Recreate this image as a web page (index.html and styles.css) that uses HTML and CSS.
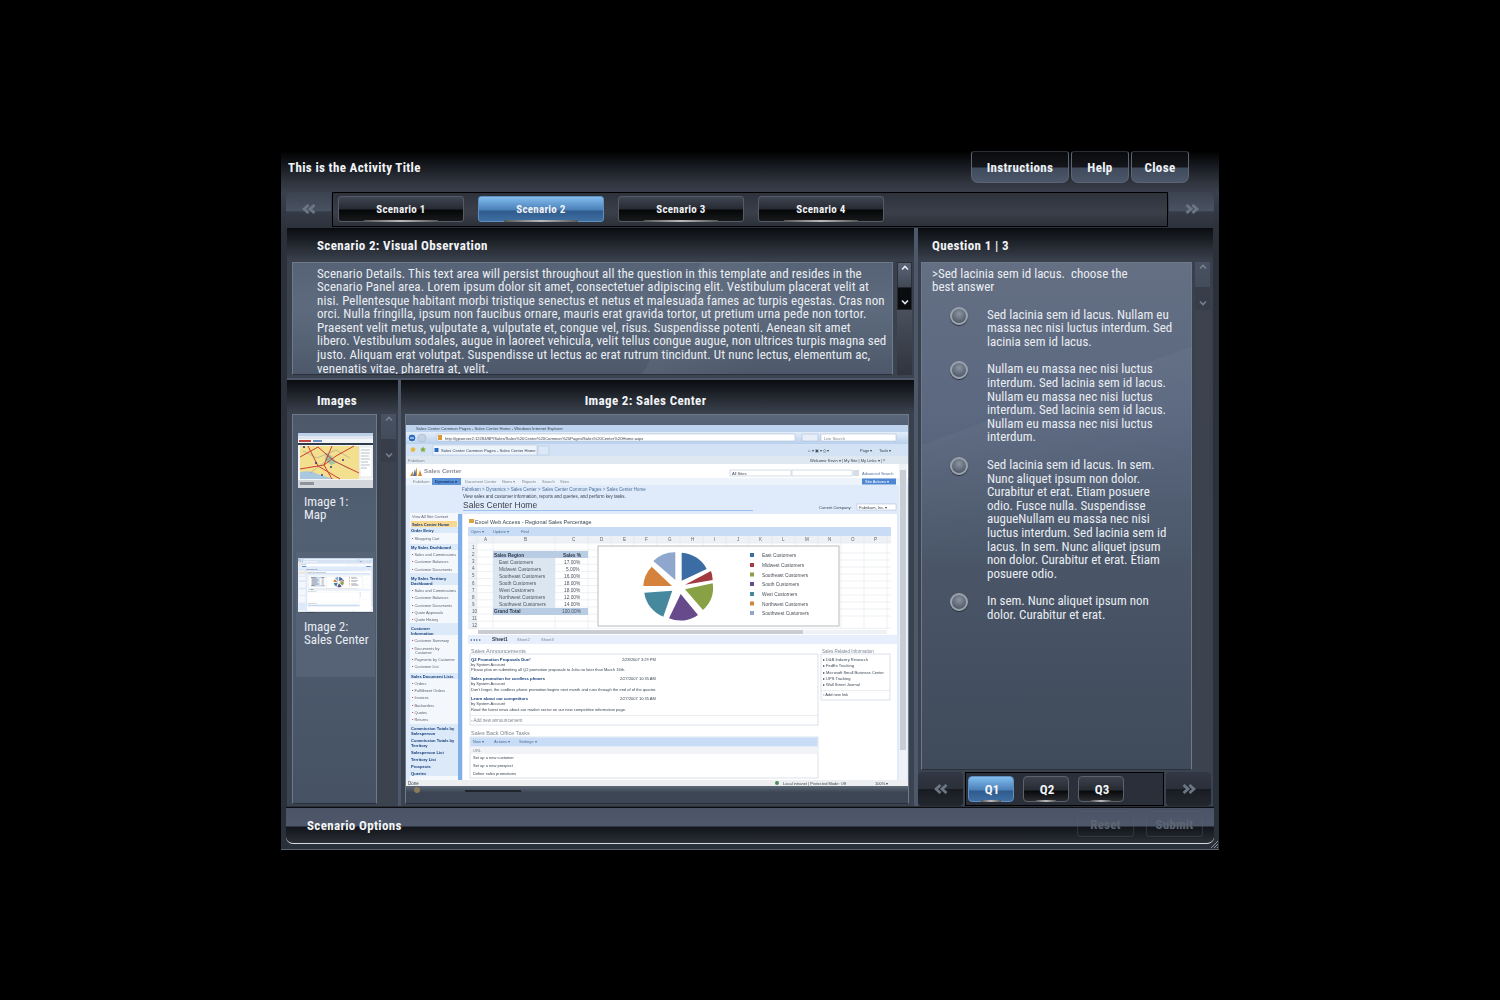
FILE: index.html
```html
<!DOCTYPE html>
<html lang="en">
<head>
<meta charset="utf-8">
<title>Activity</title>
<link rel="stylesheet" href="styles.css">
</head>
<body>
<div class="window">
  <header class="titlebar">
    <div class="activity-title">This is the Activity Title</div>
    <div class="top-buttons">
      <button class="top-btn btn-instructions">Instructions</button>
      <button class="top-btn btn-help">Help</button>
      <button class="top-btn btn-close">Close</button>
    </div>
  </header>

  <nav class="scenario-nav">
    <div class="arrow arrow-left"><svg class="dbl" viewBox="0 0 14 10"><path d="M6.500 1 2 5l4.500 4M12.500 1 8 5l4.500 4"/></svg></div>
    <div class="strip">
      <div class="tab">Scenario 1</div>
      <div class="tab active">Scenario 2</div>
      <div class="tab">Scenario 3</div>
      <div class="tab">Scenario 4</div>
    </div>
    <div class="arrow arrow-right"><svg class="dbl" viewBox="0 0 14 10"><path d="M1.500 1 6 5 1.500 9M7.500 1 12 5 7.500 9"/></svg></div>
  </nav>

  <main class="main">
    <div class="left-col">
      <section class="panel scenario-panel">
        <h2 class="panel-head head-indent">Scenario 2: Visual Observation</h2>
        <div class="panel-body">
          <div class="box text-box">
            <p class="copy scenario-copy">Scenario Details. This text area will persist throughout all the question in this template and resides in the<br>Scenario Panel area. Lorem ipsum dolor sit amet, consectetuer adipiscing elit. Vestibulum placerat velit at<br>nisi. Pellentesque habitant morbi tristique senectus et netus et malesuada fames ac turpis egestas. Cras non<br>orci. Nulla fringilla, ipsum non faucibus ornare, mauris erat gravida tortor, ut pretium urna pede non tortor.<br>Praesent velit metus, vulputate a, vulputate et, congue vel, risus. Suspendisse potenti. Aenean sit amet<br>libero. Vestibulum sodales, augue in laoreet vehicula, velit tellus congue augue, non ultrices turpis magna sed<br>justo. Aliquam erat volutpat. Suspendisse ut lectus ac erat rutrum tincidunt. Ut nunc lectus, elementum ac,<br>venenatis vitae, pharetra at, velit.</p>
          </div>
          <div class="scrollbar">
            <div class="sb-up"><svg class="chev" viewBox="0 0 8 6"><path d="M1 4.500 4 1.500l3 3"/></svg></div>
            <div class="sb-thumb"><svg class="chev" viewBox="0 0 8 6"><path d="M1 1.500 4 4.500l3-3"/></svg></div>
            <div class="sb-rest"></div>
          </div>
        </div>
      </section>

      <div class="lower-row">
        <section class="panel images-panel">
          <h2 class="panel-head head-images">Images</h2>
          <div class="panel-body">
            <div class="box thumbs">
              <div class="thumb-card">
                <svg class="thumb-img" viewBox="0 0 75 55">
                  <rect width="75" height="55" fill="#f4f5f7"/>
                  <rect width="75" height="3" fill="#bcd0e8"/>
                  <rect y="3" width="75" height="3" fill="#dfe6f0"/>
                  <rect x="1" y="7" width="12" height="2" fill="#c2473e"/>
                  <rect x="15" y="7" width="9" height="2" fill="#6f8fc0"/>
                  <rect y="10" width="75" height="2" fill="#2f3a4a"/>
                  <path d="M2 13h59v33H2z" fill="#f3e08e"/>
                  <path d="M2 39c8-2 14 0 20 3l14 4H2z" fill="#a9c7de"/>
                  <path d="M28 20l6 3 4 7-5 2-6-5z" fill="#9fc7a2"/>
                  <path d="M2 24 20 14l16 14 25 12M10 13l10 20 22 13M2 36l24-4 12-9 18-10M34 13l-8 19 8 14" stroke="#cf3b33" stroke-width="1" fill="none"/>
                  <path d="M5 18l14 7 19-8 14 8M12 40l20-15 19 11" stroke="#7b7f86" stroke-width=".4" fill="none"/>
                  <circle cx="6" cy="14" r="1.100" fill="#2c3e8c"/>
                  <circle cx="18" cy="30" r="1.100" fill="#2c3e8c"/>
                  <circle cx="33" cy="34" r="1" fill="#2c3e8c"/>
                  <circle cx="45" cy="27" r="1" fill="#2c3e8c"/>
                  <circle cx="24" cy="42" r="1" fill="#2c3e8c"/>
                  <rect x="62" y="14" width="12" height="30" fill="#fff" stroke="#c3c7ce" stroke-width=".4"/>
                  <path d="M63 17h9M63 20h9M63 23h8M63 26h9M63 29h7M63 32h9M63 35h6" stroke="#9aa2ad" stroke-width=".7"/>
                  <rect y="47" width="75" height="8" fill="#d4d7dc"/>
                  <rect x="2" y="49" width="14" height="3" fill="#8e949d"/>
                </svg>
                <div class="thumb-label">Image 1:<br>Map</div>
              </div>
              <div class="thumb-card selected">
                <svg class="thumb-img" viewBox="406 425 502 368"><use href="#shot"/></svg>
                <div class="thumb-label">Image 2:<br>Sales Center</div>
              </div>
            </div>
            <div class="scrollbar sb-faded">
              <div class="sb-up"><svg class="chev" viewBox="0 0 8 6"><path d="M1 4.500 4 1.500l3 3"/></svg></div>
              <div class="sb-thumb"><svg class="chev" viewBox="0 0 8 6"><path d="M1 1.500 4 4.500l3-3"/></svg></div>
              <div class="sb-rest"></div>
            </div>
          </div>
        </section>

        <section class="panel image-panel">
          <h2 class="panel-head head-center">Image 2: Sales Center</h2>
          <div class="panel-body">
            <div class="box image-box">
              <svg class="shot" viewBox="406 425 502 368">
                <g id="shot">
                  <defs>
                    <linearGradient id="gBar" x1="0" y1="0" x2="0" y2="1"><stop offset="0" stop-color="#e4eefa"/><stop offset="1" stop-color="#b9d0ec"/></linearGradient>
                    <linearGradient id="gTask" x1="0" y1="0" x2="0" y2="1"><stop offset="0" stop-color="#5d6978"/><stop offset="1" stop-color="#39424f"/></linearGradient>
                  </defs>
                  <rect x="406" y="425" width="502" height="361" fill="#dfeafa"/>
                  <rect x="406" y="425" width="502" height="7" fill="#bed4ee"/>
                  <text class="s41" x="416" y="430">Sales Center Common Pages - Sales Center Home - Windows Internet Explorer</text>
                  <rect x="406" y="432" width="502" height="12" fill="url(#gBar)"/>
                  <circle cx="412" cy="438" r="4" fill="#2a6cc0" stroke="#e5eef8"/>
                  <path d="M410 438h4" stroke="#fff"/>
                  <circle cx="422" cy="438" r="4" fill="#c6d2e2" stroke="#9eaec4" stroke-width=".5"/>
                  <rect x="437" y="434" width="358" height="7" fill="#fff" stroke="#9fb5d0" stroke-width=".5"/>
                  <rect x="438" y="435" width="4" height="5" fill="#d99a3a"/>
                  <text class="s41" x="445" y="439.500">http://gpserver2:12284/BP/Sales/Sales%20Center%20Common%20Pages/Sales%20Center%20Home.aspx</text>
                  <rect x="802" y="434" width="16" height="7" fill="#e8eff9" stroke="#9fb5d0" stroke-width=".5"/>
                  <rect x="821" y="434" width="75" height="7" fill="#fff" stroke="#9fb5d0" stroke-width=".5"/>
                  <text class="s4g" x="824" y="439.500">Live Search</text>
                  <rect x="406" y="444" width="502" height="12" fill="#d3e2f4"/>
                  <path d="M413 446.500l1 2 2 .3-1.500 1.500.4 2-1.900-1-1.900 1 .4-2-1.500-1.500 2-.3z" fill="#e5b32c"/>
                  <path d="M423 446.500l1 2 2 .3-1.500 1.500.4 2-1.900-1-1.900 1 .4-2-1.500-1.500 2-.3z" fill="#7fae3a"/>
                  <rect x="433" y="445" width="104" height="10" fill="#eef4fc" stroke="#aac0dc" stroke-width=".5"/>
                  <rect x="434.500" y="448" width="4" height="4" fill="#2a6cc0"/>
                  <text class="s41" x="441" y="451.500">Sales Center Common Pages - Sales Center Home</text>
                  <rect x="538" y="446" width="11" height="9" fill="#dce8f6" stroke="#aac0dc" stroke-width=".5"/>
                  <text class="s4" x="808" y="451.500">⌂ ▾  ▣ ▾  ⎙ ▾</text>
                  <text class="s4" x="860" y="451.500">Page ▾</text>
                  <text class="s4" x="879" y="451.500">Tools ▾</text>
                  <rect x="406" y="456" width="502" height="8" fill="#dfe7f1"/>
                  <text class="s4g" x="408" y="462">Fabrikam</text>
                  <text class="s4" x="810" y="462">Welcome Kevin ▾ | My Site | My Links ▾ | ?</text>
                  <rect x="406" y="464" width="502" height="14" fill="#fff"/>
                  <path d="M410 476l3-5v5zM414 476l3-9v9zM418 476l2-6 2 6z" fill="#d8892e"/>
                  <path d="M413 476l2-7 1 7z" fill="#3a6fb5"/>
                  <text class="logo" x="424" y="473">Sales Center</text>
                  <rect x="730" y="470" width="61" height="6" fill="#fff" stroke="#a9bcd3" stroke-width=".5"/>
                  <text class="s4" x="732" y="474.500">All Sites</text>
                  <rect x="792" y="470" width="60" height="6" fill="#fff" stroke="#a9bcd3" stroke-width=".5"/>
                  <rect x="853" y="470" width="6" height="6" fill="#d5dde8"/>
                  <text class="s4b" x="862" y="474.500">Advanced Search</text>
                  <rect x="406" y="478" width="502" height="7" fill="#edf3fb"/>
                  <text class="s4g" x="413" y="483">Fabrikam</text>
                  <rect x="432" y="478" width="29" height="7" fill="#5f93d8"/>
                  <text class="s4n" x="435" y="483">Dynamics ▾</text>
                  <text class="s4g" x="465" y="483">Document Center</text>
                  <text class="s4g" x="502" y="483">News ▾</text>
                  <text class="s4g" x="522" y="483">Reports</text>
                  <text class="s4g" x="542" y="483">Search</text>
                  <text class="s4g" x="560" y="483">Sites</text>
                  <rect x="862" y="478.500" width="34" height="6" fill="#4f86d2"/>
                  <text class="s4w" x="865" y="483">Site Actions ▾</text>
                  <text class="s45b" x="462" y="490.500">Fabrikam &gt; Dynamics &gt; Sales Center &gt; Sales Center Common Pages &gt; Sales Center Home</text>
                  <text class="s45" x="463" y="498">View sales and customer information, reports and queries, and perform key tasks.</text>
                  <text class="hero" x="463" y="507.500">Sales Center Home</text>
                  <rect x="463" y="510" width="290" height=".7" fill="#7fb0e8"/>
                  <text class="s4" x="819" y="508.500">Current Company:</text>
                  <rect x="857" y="504" width="39" height="6" fill="#fff" stroke="#a9bcd3" stroke-width=".5"/>
                  <text class="s4" x="859" y="508.500">Fabrikam, Inc. ▾</text>

                  <rect x="458" y="514" width="4" height="267" fill="#7fafe8"/>
                  <rect x="410" y="513" width="48" height="267" fill="#f4f8fd"/>
                  <rect x="411" y="521" width="46" height="6" fill="#fbd88f"/>
                  <rect x="410" y="527" width="48" height="6" fill="#dce9f8"/>
                  <rect x="410" y="544" width="48" height="6" fill="#dce9f8"/>
                  <rect x="410" y="573" width="48" height="12" fill="#dce9f8"/>
                  <rect x="410" y="623" width="48" height="12" fill="#dce9f8"/>
                  <rect x="410" y="673" width="48" height="6" fill="#dce9f8"/>
                  <rect x="410" y="724" width="48" height="52" fill="#dce9f8"/>
                  <text class="n" x="412" y="518">View All Site Content</text>
                  <text class="nh" x="412" y="525.500">Sales Center Home</text>
                  <text class="nh" x="411" y="532">Order Entry</text>
                  <text class="n" x="412" y="539.500"><tspan class="bul">▪</tspan> Shopping Cart</text>
                  <text class="nh" x="411" y="548.500">My Sales Dashboard</text>
                  <text class="n" x="412" y="556"><tspan class="bul">▪</tspan> Sales and Commissions</text>
                  <text class="n" x="412" y="563"><tspan class="bul">▪</tspan> Customer Balances</text>
                  <text class="n" x="412" y="570.500"><tspan class="bul">▪</tspan> Customer Documents</text>
                  <text class="nh" x="411" y="579.500">My Sales Territory</text>
                  <text class="nh" x="411" y="584.500">Dashboard</text>
                  <text class="n" x="412" y="592"><tspan class="bul">▪</tspan> Sales and Commissions</text>
                  <text class="n" x="412" y="599"><tspan class="bul">▪</tspan> Customer Balances</text>
                  <text class="n" x="412" y="606.500"><tspan class="bul">▪</tspan> Customer Documents</text>
                  <text class="n" x="412" y="613.500"><tspan class="bul">▪</tspan> Quote Approvals</text>
                  <text class="n" x="412" y="620.500"><tspan class="bul">▪</tspan> Quote History</text>
                  <text class="nh" x="411" y="629.500">Customer</text>
                  <text class="nh" x="411" y="634.500">Information</text>
                  <text class="n" x="412" y="642"><tspan class="bul">▪</tspan> Customer Summary</text>
                  <text class="n" x="412" y="649.500"><tspan class="bul">▪</tspan> Documents by</text>
                  <text class="n" x="415" y="654">Customer</text>
                  <text class="n" x="412" y="661"><tspan class="bul">▪</tspan> Payments by Customer</text>
                  <text class="n" x="412" y="668"><tspan class="bul">▪</tspan> Customer List</text>
                  <text class="nh" x="411" y="677.500">Sales Document Lists</text>
                  <text class="n" x="412" y="684.500"><tspan class="bul">▪</tspan> Orders</text>
                  <text class="n" x="412" y="692"><tspan class="bul">▪</tspan> Fulfillment Orders</text>
                  <text class="n" x="412" y="699"><tspan class="bul">▪</tspan> Invoices</text>
                  <text class="n" x="412" y="706.500"><tspan class="bul">▪</tspan> Backorders</text>
                  <text class="n" x="412" y="713.500"><tspan class="bul">▪</tspan> Quotes</text>
                  <text class="n" x="412" y="720.500"><tspan class="bul">▪</tspan> Returns</text>
                  <text class="nh" x="411" y="730">Commission Totals by</text>
                  <text class="nh" x="411" y="735">Salesperson</text>
                  <text class="nh" x="411" y="741.500">Commission Totals by</text>
                  <text class="nh" x="411" y="746.500">Territory</text>
                  <text class="nh" x="411" y="753.500">Salesperson List</text>
                  <text class="nh" x="411" y="760.500">Territory List</text>
                  <text class="nh" x="411" y="767.500">Prospects</text>
                  <text class="nh" x="411" y="774.500">Queries</text>

                  <rect x="463" y="514" width="434" height="266" fill="#fff"/>
                  <rect x="469" y="519" width="5" height="4" fill="#d9a441"/>
                  <text class="s55" x="475" y="523.500">Excel Web Access - Regional Sales Percentage</text>
                  <rect x="468" y="527" width="423" height="9" fill="#c8dcf5"/>
                  <text class="s4b" x="471" y="532.500">Open ▾</text>
                  <text class="s4b" x="493" y="532.500">Update ▾</text>
                  <text class="s4b" x="521" y="532.500">Find</text>
                  <rect x="468" y="536" width="423" height="7" fill="#eef1f5"/>
                  <rect x="468" y="543" width="9" height="86" fill="#eef1f5"/>
                  <g class="grid-lines">
                    <path d="M477 536v93M493 536v93M555 536v93M588 536v93M611 536v10M634 536v10M657 536v10M680 536v10M703 536v10M726 536v10M749 536v10M772 536v10M795 536v10M818 536v10M841 536v93M864 536v93M887 536v93"/>
                    <path d="M468 543h423M468 550h130M468 557.100h130M468 564.300h130M468 571.400h130M468 578.500h130M468 585.600h130M468 592.700h130M468 599.800h130M468 607h130M468 614.100h130M468 621.200h130M468 628.300h423M839 553h52M839 560h52M839 567h52M839 574h52M839 581h52M839 588h52M839 595h52M839 602h52M839 609h52M839 616h52"/>
                  </g>
                  <g class="col-heads">
                    <text x="484" y="541">A</text><text x="524" y="541">B</text><text x="572" y="541">C</text><text x="600" y="541">D</text><text x="623" y="541">E</text><text x="645" y="541">F</text><text x="668" y="541">G</text><text x="691" y="541">H</text><text x="714" y="541">I</text><text x="737" y="541">J</text><text x="759" y="541">K</text><text x="782" y="541">L</text><text x="805" y="541">M</text><text x="828" y="541">N</text><text x="851" y="541">O</text><text x="874" y="541">P</text>
                  </g>
                  <g class="row-heads">
                    <text x="472" y="549">1</text><text x="472" y="556">2</text><text x="472" y="563.200">3</text><text x="472" y="570.300">4</text><text x="472" y="577.400">5</text><text x="472" y="584.500">6</text><text x="472" y="591.600">7</text><text x="472" y="598.700">8</text><text x="472" y="605.800">9</text><text x="472" y="613">10</text><text x="472" y="620">11</text><text x="472" y="627.200">12</text>
                  </g>
                  <rect x="493" y="551" width="95" height="7" fill="#b8cce4"/>
                  <rect x="493" y="558" width="62" height="50" fill="#dce6f1"/>
                  <rect x="493" y="608" width="95" height="7" fill="#b8cce4"/>
                  <text class="c5b" x="494" y="556.500">Sales Region</text>
                  <text class="c5b" x="563" y="556.500">Sales %</text>
                  <text class="c5" x="499" y="563.500">East Customers</text><text class="c5" x="564" y="563.500">17.00%</text>
                  <text class="c5" x="499" y="570.500">Midwest Customers</text><text class="c5" x="566" y="570.500">5.00%</text>
                  <text class="c5" x="499" y="577.700">Southeast  Customers</text><text class="c5" x="564" y="577.700">16.00%</text>
                  <text class="c5" x="499" y="584.800">South Customers</text><text class="c5" x="564" y="584.800">18.00%</text>
                  <text class="c5" x="499" y="591.900">West Customers</text><text class="c5" x="564" y="591.900">18.00%</text>
                  <text class="c5" x="499" y="599">Northwest Customers</text><text class="c5" x="564" y="599">12.00%</text>
                  <text class="c5" x="499" y="606.100">Southwest Customers</text><text class="c5" x="564" y="606.100">14.00%</text>
                  <text class="c5b" x="494" y="613.300">Grand Total</text><text class="c5" x="562" y="613.300">100.00%</text>

                  <rect x="598" y="546" width="241" height="80" fill="#fff" stroke="#a8abb0" stroke-width=".8"/>
                  <path d="M681.700 580.700V552.700A30 30 0 0 1 706.700 569Z" fill="#3b6ca3"/>
                  <path d="M685 584.700 711 571A30 30 0 0 1 712.700 580Z" fill="#a23a3f"/>
                  <path d="M685 589.300 712.700 583.300A30 30 0 0 1 703 610Z" fill="#87a144"/>
                  <path d="M680.700 594 698 615A30 30 0 0 1 669 618.300Z" fill="#664a8b"/>
                  <path d="M672.300 590.700 663.300 616.700A30 30 0 0 1 644.300 592.700Z" fill="#46899e"/>
                  <path d="M672 586H643.300A30 30 0 0 1 651.700 566.700Z" fill="#d4823c"/>
                  <path d="M675.300 580 653.300 561A30 30 0 0 1 675.300 552.300Z" fill="#8fa7cd"/>
                  <g class="legend">
                    <rect x="750" y="553" width="4" height="4" fill="#3b6ca3"/><text x="762" y="557">East Customers</text>
                    <rect x="750" y="563" width="4" height="4" fill="#a23a3f"/><text x="762" y="566.500">Midwest Customers</text>
                    <rect x="750" y="572.500" width="4" height="4" fill="#87a144"/><text x="762" y="576.500">Southeast  Customers</text>
                    <rect x="750" y="582" width="4" height="4" fill="#664a8b"/><text x="762" y="586">South Customers</text>
                    <rect x="750" y="592" width="4" height="4" fill="#46899e"/><text x="762" y="596">West Customers</text>
                    <rect x="750" y="601.500" width="4" height="4" fill="#d4823c"/><text x="762" y="605.500">Northwest Customers</text>
                    <rect x="750" y="611" width="4" height="4" fill="#8fa7cd"/><text x="762" y="615">Southwest Customers</text>
                  </g>
                  <rect x="478" y="630" width="325" height="4" fill="#c9cdd3"/>
                  <rect x="803" y="630" width="84" height="4" fill="#eef1f5"/>
                  <rect x="468" y="635" width="429" height="9" fill="#e6effb"/>
                  <text class="s4b" x="470" y="641">◂ ◂ ▸ ▸</text>
                  <text class="c5b" x="492" y="641">Sheet1</text>
                  <text class="s4g" x="517" y="641">Sheet2</text>
                  <text class="s4g" x="541" y="641">Sheet3</text>

                  <text class="s55g" x="471" y="652.500">Sales Announcements</text>
                  <rect x="470" y="654" width="348" height="71" fill="#fff" stroke="#b7c6d8" stroke-width=".5"/>
                  <text class="nb" x="471" y="660.500">Q2 Promotion Proposals Due!</text>
                  <text class="s4" x="622" y="660.500">2/28/2007 3:29 PM</text>
                  <text class="s4" x="471" y="665.500">by System Account</text>
                  <text class="s4" x="471" y="671">Please plan on submitting all Q2 promotion proposals to Julia no later than March 16th.</text>
                  <text class="nb" x="471" y="680">Sales promotion for cordless phones</text>
                  <text class="s4" x="620" y="680">2/27/2007 10:35 AM</text>
                  <text class="s4" x="471" y="685">by System Account</text>
                  <text class="s4" x="471" y="690.500">Don't forget, the cordless phone promotion begins next month and runs through the end of of the quarter.</text>
                  <text class="nb" x="471" y="699.500">Learn about our competitors</text>
                  <text class="s4" x="620" y="699.500">2/27/2007 10:35 AM</text>
                  <text class="s4" x="471" y="704.500">by System Account</text>
                  <text class="s4" x="471" y="710.500">Read the latest news about our market sector on our new competitive information page.</text>
                  <path d="M470 715.500h348" stroke="#d3dbe5" stroke-width=".5"/>
                  <text class="s45g" x="471" y="721.500">▫ Add new announcement</text>
                  <text class="s55g" x="471" y="735">Sales Back Office Tasks</text>
                  <rect x="470" y="737" width="348" height="41" fill="#fff" stroke="#b7c6d8" stroke-width=".5"/>
                  <rect x="470.500" y="737.500" width="347" height="9" fill="#c8dcf5"/>
                  <text class="s4b" x="473" y="743">New ▾</text><text class="s4b" x="494" y="743">Actions ▾</text><text class="s4b" x="519" y="743">Settings ▾</text>
                  <rect x="470.500" y="747" width="347" height="7" fill="#f1f3f6"/>
                  <text class="s4g" x="473" y="751.500">URL</text>
                  <text class="s4" x="473" y="759">Set up a new customer</text>
                  <text class="s4" x="473" y="767">Set up a new prospect</text>
                  <text class="s4" x="473" y="775">Define sales promotions</text>

                  <text class="s45g" x="822" y="652.500">Sales Related Information</text>
                  <rect x="821" y="654" width="69" height="46" fill="#fff" stroke="#b7c6d8" stroke-width=".5"/>
                  <text class="s4" x="823" y="660.500">▸ D&amp;B Industry Research</text>
                  <text class="s4" x="823" y="667">▸ FedEx Tracking</text>
                  <text class="s4" x="823" y="673.500">▸ Microsoft Small Business Center</text>
                  <text class="s4" x="823" y="680">▸ UPS Tracking</text>
                  <text class="s4" x="823" y="686">▸ Wall Street Journal</text>
                  <path d="M821 690.500h69" stroke="#d3dbe5" stroke-width=".5"/>
                  <text class="s4" x="823" y="696">▫ Add new link</text>

                  <rect x="899" y="464" width="8" height="316" fill="#eef1f5"/>
                  <rect x="900" y="470" width="6" height="280" fill="#c9ced5"/>
                  <rect x="406" y="780" width="502" height="6" fill="#eceef0"/>
                  <text class="s45" x="408" y="785">Done</text>
                  <circle cx="777" cy="783" r="2" fill="#4c8a5e"/>
                  <text class="s4" x="783" y="785">Local intranet | Protected Mode: Off</text>
                  <text class="s4" x="875" y="785">100%  ▾</text>
                  <rect x="406" y="786" width="502" height="7" fill="url(#gTask)"/>
                  <rect x="465" y="790" width="56" height="2" fill="#20252c"/>
                  <circle cx="417" cy="790" r="3" fill="#8c7a5a"/>
                </g>
              </svg>
            </div>
          </div>
        </section>
      </div>
    </div>

    <section class="panel question-panel">
      <h2 class="panel-head head-question">Question 1 | 3</h2>
      <div class="panel-body">
        <div class="box question-box">
          <p class="copy prompt">&gt;Sed lacinia sem id lacus.&nbsp; choose the<br>best answer</p>
          <div class="answer"><span class="radio"></span><p class="copy">Sed lacinia sem id lacus. Nullam eu<br>massa nec nisi luctus interdum. Sed<br>lacinia sem id lacus.</p></div>
          <div class="answer"><span class="radio"></span><p class="copy">Nullam eu massa nec nisi luctus<br>interdum. Sed lacinia sem id lacus.<br>Nullam eu massa nec nisi luctus<br>interdum. Sed lacinia sem id lacus.<br>Nullam eu massa nec nisi luctus<br>interdum.</p></div>
          <div class="answer"><span class="radio"></span><p class="copy">Sed lacinia sem id lacus. In sem.<br>Nunc aliquet ipsum non dolor.<br>Curabitur et erat. Etiam posuere<br>odio. Fusce nulla. Suspendisse<br>augueNullam eu massa nec nisi<br>luctus interdum. Sed lacinia sem id<br>lacus. In sem. Nunc aliquet ipsum<br>non dolor. Curabitur et erat. Etiam<br>posuere odio.</p></div>
          <div class="answer"><span class="radio"></span><p class="copy">In sem. Nunc aliquet ipsum non<br>dolor. Curabitur et erat.</p></div>
        </div>
        <div class="scrollbar sb-faded">
          <div class="sb-up"><svg class="chev" viewBox="0 0 8 6"><path d="M1 4.500 4 1.500l3 3"/></svg></div>
          <div class="sb-thumb"><svg class="chev" viewBox="0 0 8 6"><path d="M1 1.500 4 4.500l3-3"/></svg></div>
          <div class="sb-rest"></div>
        </div>
      </div>
      <div class="q-nav">
        <div class="q-arrow"><svg class="dbl" viewBox="0 0 14 10"><path d="M6.500 1 2 5l4.500 4M12.500 1 8 5l4.500 4"/></svg></div>
        <div class="q-strip">
          <div class="q-tab active">Q1</div>
          <div class="q-tab">Q2</div>
          <div class="q-tab">Q3</div>
        </div>
        <div class="q-arrow"><svg class="dbl" viewBox="0 0 14 10"><path d="M1.500 1 6 5 1.500 9M7.500 1 12 5 7.500 9"/></svg></div>
      </div>
    </section>
  </main>

  <footer class="options">
    <div class="options-title">Scenario Options</div>
    <div class="options-buttons">
      <button class="opt-btn">Reset</button>
      <button class="opt-btn">Submit</button>
    </div>
  </footer>
  <svg class="grip" viewBox="0 0 9 9"><path d="M1 8 8 1M4 8 8 4M7 8 8 7"/></svg>
</div>
</body>
</html>
```

FILE: styles.css
```css
* { box-sizing: border-box; }
html, body { margin: 0; height: 100%; background: #000; }
body {
  display: flex;
  align-items: center;
  justify-content: center;
  font-family: "Liberation Sans Narrow", "Roboto Condensed", "Roboto", "Liberation Sans", sans-serif;
  color: #e6eaf0;
}
p, h2 { margin: 0; }
button { font: inherit; color: inherit; padding: 0; }

.window {
  position: relative;
  width: 938px;
  height: 699px;
  display: flex;
  flex-direction: column;
  background: linear-gradient(#000 0, #15181e 14px, #30353f 32px, #3a404d 42px, #2b303a 80px, #2a303a 100%);
  border-bottom: 1px solid #5c626b;
}

.titlebar {
  height: 41px;
  flex: none;
  display: flex;
  justify-content: space-between;
  padding: 0 30px 0 7px;
}
.activity-title { font-size: 13px; letter-spacing: .35px; font-weight: 700; color: #f2f4f7; line-height: 34px; }
.top-buttons { display: flex; gap: 2px; height: 32px; }
.top-btn {
  border: 1px solid #5b6472;
  border-top-color: #2a2e35;
  border-radius: 3px 3px 7px 7px;
  padding-top: 2px;
  background: linear-gradient(#0a0b0e 0, #14161b 15px, #3f4a5c 16px, #4c586a 100%);
  font-size: 13px;
  letter-spacing: .35px;
  font-weight: 700;
  color: #eef1f4;
}
.btn-instructions { width: 98px; }
.btn-help, .btn-close { width: 58px; }

.scenario-nav { height: 35px; flex: none; display: flex; padding: 0 5px; gap: 1px; }
.arrow {
  width: 45px;
  display: flex;
  align-items: center;
  justify-content: center;
  background: linear-gradient(#3b4250, #4a5362 55%, #353b47 56%, #2d323c);
  padding-bottom: 1px;
}
.arrow-left { border-radius: 7px 0 0 0; }
.arrow-right { border-radius: 0 7px 0 0; }
.dbl { width: 14px; height: 10px; fill: none; stroke: #6d7684; stroke-width: 2.800; }
.strip {
  flex: 1;
  display: flex;
  gap: 14px;
  padding: 3px 5px;
  border: 1px solid #000;
  background: linear-gradient(#2e323b, #3a3f4a 60%, #2c3038);
}
.tab {
  position: relative;
  width: 126px;
  height: 26px;
  display: flex;
  align-items: center;
  justify-content: center;
  padding-top: 2px;
  border: 1px solid #555c68;
  border-radius: 3px;
  font-size: 11px;
  letter-spacing: .25px;
  font-weight: 700;
  color: #f1f3f5;
  background: linear-gradient(#3f4652, #262a32 12px, #060708 13px, #16181b 100%);
}
.tab::after, .q-tab::after {
  content: "";
  position: absolute;
  left: 25px;
  right: 25px;
  bottom: -1px;
  height: 2px;
  background: linear-gradient(90deg, #555, #bbb 50%, #555);
}
.tab.active, .q-tab.active {
  border-color: #5e8fbe;
  background: linear-gradient(#82bdee, #4a7fb8 13px, #2f5a8c 14px, #3f6fa3 100%);
}

.main {
  flex: 1;
  display: grid;
  grid-template-columns: 631px 295px;
  margin: 1px 6px 0;
  min-height: 0;
  gap: 0;
  background: #4d596a;
}
.left-col { display: flex; flex-direction: column; gap: 2px; min-height: 0; }
.lower-row { flex: 1; display: flex; gap: 3px; min-height: 0; margin-right: 4px; }

.panel {
  display: flex;
  flex-direction: column;
  background: linear-gradient(#0a0c0f, #39404c 32px, #3b4350 100%);
  min-width: 0;
}
.panel-head {
  height: 34px;
  flex: none;
  font-size: 13px;
  letter-spacing: .35px;
  font-weight: 700;
  color: #f2f4f7;
  line-height: 36px;
}
.lower-row .panel-head { line-height: 42px; }
.head-indent { padding-left: 30px; }
.head-images { padding-left: 30px; }
.head-center { text-align: center; padding-right: 24px; }
.head-question { padding-left: 14px; }

.scenario-panel { height: 150px; flex: none; margin-right: 4px; }
.scenario-panel .panel-body { height: 114px; padding: 0 2px 0 5px; }
.panel-body { display: flex; gap: 2px; flex: 1; min-height: 0; }

.box {
  border: 1px solid #6d7a8c;
  border-bottom-color: #2b313b;
  background:
    linear-gradient(118deg, transparent 62%, rgba(255,255,255,.05) 62.200%, transparent 78%),
    linear-gradient(#566376, #5e6b7e 40%, #4d596b);
  overflow: hidden;
}
.text-box { flex: 1; padding: 4px 0 0 24px; height: 113px; }
.copy { font-size: 13px; line-height: 13.600px; color: #e9edf2; white-space: nowrap; }
.scenario-copy { letter-spacing: .09px; }

.scrollbar { width: 15px; flex: none; display: flex; flex-direction: column; margin-top: 0; background: #3a404b; }
.scenario-panel .scrollbar { height: 113px; margin-left: 2px; }
.sb-up { height: 25px; display: flex; justify-content: center; padding-top: 2px; background: linear-gradient(#5a6475, #414956); border: 1px solid #2b2f37; border-bottom: 0; }
.sb-thumb { height: 23px; display: flex; justify-content: center; align-items: flex-end; padding-bottom: 4px; background: #0b0c0f; border: 1px solid #23262c; }
.sb-rest { flex: 1; background: linear-gradient(#4a515d, #2f343d); }
.chev { width: 8px; height: 6px; fill: none; stroke: #e7ebf0; stroke-width: 1.600; }
.sb-faded .sb-up { background: linear-gradient(#475161, #434c5b); border: 0; }
.sb-faded .sb-thumb { background: #373e4a; border: 0; }
.sb-faded .chev { stroke: #778192; }
.sb-faded .sb-rest { background: #3c434f; }

.images-panel { width: 111px; flex: none; }
.images-panel .panel-body { padding: 0 2px 2px 5px; }
.thumbs { width: 85px; padding: 12px 2px 0 3px; background: linear-gradient(#4d596a, #526074 30%, #465264); }
.thumb-card { width: 79px; height: 125px; padding: 6px 2px 0 2px; }
.thumb-card.selected { background: #566377; }
.thumb-img { display: block; width: 75px; height: 55px; }
.thumb-label { font-size: 13px; line-height: 13.600px; padding: 7px 0 0 6px; color: #e9edf2; white-space: nowrap; }
.images-panel .scrollbar { margin-left: 2px; }

.image-panel { flex: 1; }
.image-panel .panel-body { padding: 0 5px 2px 4px; }
.image-box {
  flex: 1;
  padding: 10px 0 0 0;
  background: linear-gradient(#5a6679, #4f5b6e 20px, #3c4554);
}
.shot { display: block; width: 502px; height: 368px; filter: blur(.25px); }
.shot text, .thumb-img text { font-family: "Liberation Sans", sans-serif; fill: #3c4654; }
.s41 { font-size: 4.150px; }
.s4 { font-size: 4px; }
.s45 { font-size: 4.500px; }
.s55 { font-size: 5.500px; }
.s4b, .s45b { fill: #4f7199 !important; }
.s4b { font-size: 4px; }
.s45b { font-size: 4.500px; }
.s4g, .s45g, .s55g { fill: #7d8792 !important; }
.s4g { font-size: 4px; }
.s45g { font-size: 4.500px; }
.s55g { font-size: 5.500px; }
.s4n { font-size: 4px; font-weight: 700; fill: #123a78 !important; }
.s4w { font-size: 4px; fill: #fff !important; }
.logo { font-size: 6.200px; font-weight: 700; fill: #8a8f96 !important; }
.hero { font-size: 8.500px; fill: #3a3f46 !important; }
.n { font-size: 3.900px; fill: #5b6470 !important; }
.bul { fill: #c2473e; }
.nh { font-size: 4.100px; font-weight: 700; fill: #173e7a !important; }
.nb { font-size: 4.200px; font-weight: 700; fill: #173e7a !important; }
.grid-lines { stroke: #dde1e6; stroke-width: .5; fill: none; }
.col-heads text, .row-heads text { font-size: 4.500px; fill: #5a626d !important; }
.c5 { font-size: 4.800px; fill: #4b5561 !important; }
.c5b { font-size: 4.800px; font-weight: 700; fill: #2f3a48 !important; }
.legend text { font-size: 4.800px; fill: #4a4f56 !important; }

.question-panel { min-height: 0; }
.question-panel .panel-body { padding: 0 3px 0 3px; gap: 3px; }
.question-box {
  flex: 1;
  padding: 4px 0 0 10px;
  background:
    linear-gradient(160deg, transparent 30%, rgba(255,255,255,.03) 30.200%, transparent 50%),
    linear-gradient(#646f83, #5b6880 30%, #4a5668 60%, #3f4a5a);
}
.prompt { margin-bottom: 14px; }
.answer { display: flex; margin-bottom: 14px; }
.radio {
  width: 18px;
  height: 18px;
  flex: none;
  margin: -1px 19px 0 18px;
  border-radius: 50%;
  border: 2px solid #9aa2ad;
  background: radial-gradient(circle at 50% 35%, #8d95a1, #555f6e 70%);
  box-shadow: 0 1px 1px #2a2f37;
}

.q-nav { height: 36px; flex: none; display: flex; gap: 2px; padding: 2px 2px 0 0; }
.q-arrow {
  width: 45px;
  display: flex;
  align-items: center;
  justify-content: center;
  border-radius: 4px;
  background: linear-gradient(#323844, #2a2f39 50%, #191c22 51%, #232730);
}
.q-strip {
  flex: 1;
  display: flex;
  gap: 9px;
  padding: 3px 2px;
  border: 1px solid #000;
  background: #2a2f39;
}
.q-tab {
  position: relative;
  width: 46px;
  height: 26px;
  display: flex;
  align-items: center;
  justify-content: center;
  padding: 1px 0 0 2px;
  border: 1px solid #5c626c;
  border-radius: 4px;
  font-size: 13px;
  font-weight: 700;
  color: #f4f6f8;
  background: linear-gradient(#3c424d, #262a32 13px, #08090b 14px, #2a2c30 100%);
}
.q-tab::after { left: 12px; right: 12px; }

.options {
  position: relative;
  height: 37px;
  margin: 1px 5px 5px 5px;
  flex: none;
  display: flex;
  justify-content: space-between;
  padding: 3px 11px 0 21px;
  border-top: 1px solid #0b0d10;
  border-bottom: 1px solid #d6dae0;
  border-radius: 0 0 7px 7px;
  background: linear-gradient(#4b5466, #4f586a 18px, #12151a 19px, #2a2e36 100%);
}
.options-title { font-size: 13px; letter-spacing: .35px; font-weight: 700; color: #f2f4f7; line-height: 29px; }
.options-buttons { display: flex; gap: 12px; }
.opt-btn {
  width: 57px;
  height: 26px;
  padding-top: 2px;
  border: 1px solid rgba(90,98,110,.35);
  border-radius: 3px;
  background: transparent;
  font-size: 13px;
  letter-spacing: .2px;
  font-weight: 700;
  color: #5d6674;
}
.grip {
  position: absolute;
  right: 0;
  bottom: 0;
  width: 9px;
  height: 9px;
  fill: none;
  stroke: #a3a9b2;
  stroke-width: .8;
}
```
